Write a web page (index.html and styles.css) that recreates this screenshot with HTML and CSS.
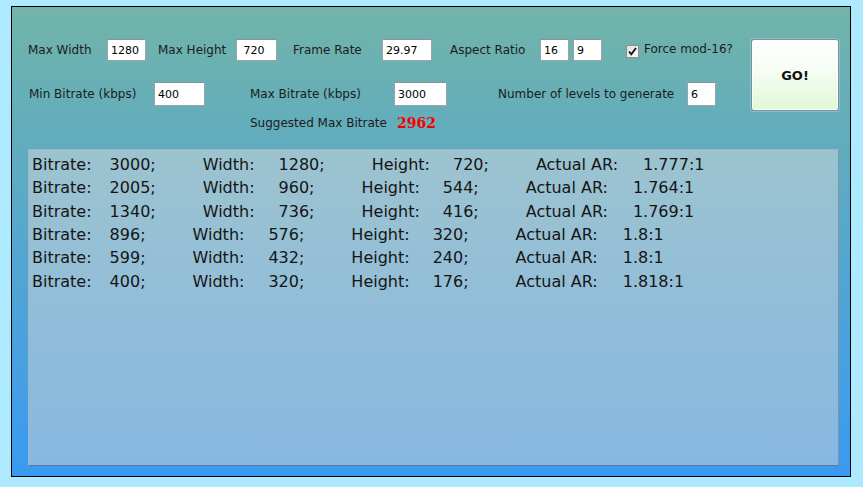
FILE: index.html
```html
<!DOCTYPE html>
<html>
<head>
<meta charset="utf-8">
<link rel="stylesheet" href="styles.css">
</head>
<body>
<div class="window">
  <div class="top">
    <div class="fields">
      <div class="row r1">
        <span class="lbl l-maxw">Max Width</span><input class="tb w39" value="1280">
        <span class="lbl l-maxh">Max Height</span><input class="tb w41" value=" 720">
        <span class="lbl l-fr">Frame Rate</span><input class="tb w50" value="29.97">
        <span class="lbl l-ar">Aspect Ratio</span><input class="tb w29" value="16"><input class="tb w29 gap4" value="9">
        <span class="check"><svg width="13" height="13" viewBox="0 0 13 13"><defs><linearGradient id="cb" x1="0" y1="0" x2="1" y2="1"><stop offset="0" stop-color="#dcdcdc"/><stop offset="1" stop-color="#ffffff"/></linearGradient></defs><rect x="0.5" y="0.5" width="12" height="12" fill="url(#cb)" stroke="#8e8f8f"/><path d="M3 6.5 L5.3 9.2 L10 3" fill="none" stroke="#111" stroke-width="1.8"/></svg></span><span class="lbl l-force">Force mod-16?</span>
      </div>
      <div class="row r2">
        <span class="lbl l-minb">Min Bitrate (kbps)</span><input class="tb w51" value="400">
        <span class="lbl l-maxb">Max Bitrate (kbps)</span><input class="tb w53" value="3000">
        <span class="lbl l-num">Number of levels to generate</span><input class="tb w29" value="6">
      </div>
      <div class="row r3">
        <span class="lbl l-sug">Suggested Max Bitrate</span><span class="sug">2962</span>
      </div>
    </div>
    <button class="go">GO!</button>
  </div>
  <div class="output">
    <div class="line"><span class="k0">Bitrate:</span><span class="v b">3000;</span><span class="k">Width:</span><span class="v w">1280;</span><span class="k">Height:</span><span class="v h">720;</span><span class="k">Actual AR:</span><span class="v a">1.777:1</span></div>
    <div class="line"><span class="k0">Bitrate:</span><span class="v b">2005;</span><span class="k">Width:</span><span class="v w">960;</span><span class="k">Height:</span><span class="v h">544;</span><span class="k">Actual AR:</span><span class="v a">1.764:1</span></div>
    <div class="line"><span class="k0">Bitrate:</span><span class="v b">1340;</span><span class="k">Width:</span><span class="v w">736;</span><span class="k">Height:</span><span class="v h">416;</span><span class="k">Actual AR:</span><span class="v a">1.769:1</span></div>
    <div class="line"><span class="k0">Bitrate:</span><span class="v b">896;</span><span class="k">Width:</span><span class="v w">576;</span><span class="k">Height:</span><span class="v h">320;</span><span class="k">Actual AR:</span><span class="v a">1.8:1</span></div>
    <div class="line"><span class="k0">Bitrate:</span><span class="v b">599;</span><span class="k">Width:</span><span class="v w">432;</span><span class="k">Height:</span><span class="v h">240;</span><span class="k">Actual AR:</span><span class="v a">1.8:1</span></div>
    <div class="line"><span class="k0">Bitrate:</span><span class="v b">400;</span><span class="k">Width:</span><span class="v w">320;</span><span class="k">Height:</span><span class="v h">176;</span><span class="k">Actual AR:</span><span class="v a">1.818:1</span></div>
  </div>
</div>
</body>
</html>
```
FILE: styles.css
```css
html, body {
  margin: 0;
  padding: 0;
  background: #aeeaff;
  font-family: "DejaVu Sans", Verdana, sans-serif;
}
body {
  padding: 6px 0 0 11px;
  height: 487px;
  box-sizing: border-box;
  overflow: hidden;
}
.window {
  width: 840px;
  height: 471px;
  box-sizing: border-box;
  border: 1px solid #000;
  background: linear-gradient(to bottom, #71b4a9 0%, #3a9af2 100%);
  padding: 32px 11px 10px 16px;
  display: flex;
  flex-direction: column;
}
.top {
  display: flex;
  align-items: flex-start;
}
.fields {
  display: flex;
  flex-direction: column;
  flex: 1;
}
.row {
  display: flex;
  align-items: center;
}
.r1 { height: 22px; }
.r2 { height: 24px; margin-top: 21px; padding-left: 1px; }
.r3 { height: 18px; margin-top: 8px; padding-left: 1px; }
.lbl {
  flex: none;
  font-size: 12px;
  color: #1c1c1c;
  white-space: nowrap;
}
.tb {
  flex: none;
  box-sizing: border-box;
  height: 100%;
  margin: 0;
  padding: 0 0 0 3px;
  border: 1px solid #9aa3ab;
  border-top-color: #8a939c;
  background: #fff;
  font-family: "DejaVu Sans", Verdana, sans-serif;
  font-size: 11px;
  color: #000;
  outline: none;
  white-space: pre;
}
.w29 { width: 29px; }
.w39 { width: 39px; }
.w41 { width: 41px; }
.w50 { width: 50px; }
.w51 { width: 51px; }
.w53 { width: 53px; }
.gap4 { margin-left: 4px; }
.l-maxw { width: 79px; }
.l-maxh { margin-left: 12px; width: 78px; }
.l-fr { margin-left: 16px; width: 89px; }
.l-ar { margin-left: 18px; width: 90px; }
.check {
  flex: none;
  margin-left: 24px;
  width: 13px;
  height: 13px;
  margin-top: 3px;
  display: block;
}
.check svg { display: block; }
.l-force { margin-left: 5px; margin-top: -2px; }
.l-minb { width: 125px; }
.l-maxb { margin-left: 45px; width: 144px; }
.l-num { margin-left: 51px; width: 189px; }
.l-sug { margin-left: 221px; width: 147px; }
.sug {
  font-family: "DejaVu Serif", "Liberation Serif", serif;
  font-weight: bold;
  font-size: 14px;
  color: #f50000;
}
.go {
  flex: none;
  margin: 0;
  width: 88px;
  height: 72px;
  box-sizing: border-box;
  border: 1px solid #7990a4;
  border-radius: 3px;
  box-shadow: inset 0 0 0 1px #ffffff, 0 0 0 1px rgba(200, 220, 230, 0.35);
  background: linear-gradient(to bottom, #ffffff 0%, #f6fdf3 45%, #dff9d4 100%);
  font-family: "DejaVu Sans", Verdana, sans-serif;
  font-weight: bold;
  font-size: 13px;
  color: #111;
  padding: 0;
}
.output {
  flex: 1;
  margin-top: 17px;
  border: 1px solid;
  border-color: #9fb6c4 #7a94a8 #5d7a90 #9fb6c4;
  background: linear-gradient(to bottom, #9cc3cf 0%, #87b8e2 100%);
  padding: 3px 2px 0 3px;
  font-size: 16px;
  line-height: 23.33px;
  color: #151515;
}
.line {
  display: flex;
  white-space: nowrap;
}
.k { margin-left: 47px; }
.v { margin-left: 22px; }
.v.b { margin-left: 18px; }
.v.w { margin-left: 24px; }
.v.h { margin-left: 23px; }
.v.a { margin-left: 25px; }
```
